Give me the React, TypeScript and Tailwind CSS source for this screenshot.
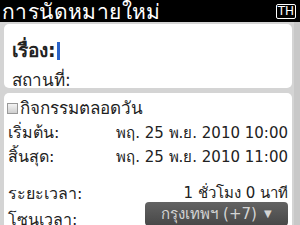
import React from 'react';

const Row = ({ label, value }: { label: string; value: string }) => (
  <div className="flex justify-between items-center h-[24px]">
    <span className="text-[16px]">{label}</span>
    <span>{value}</span>
  </div>
);

const App = () => {
  return (
    <div
      className="w-[300px] h-[225px] overflow-hidden bg-[#d4d4d4] text-[#222] text-[15px] leading-none"
      style={{ fontFamily: '"DejaVu Sans", "Noto Sans", sans-serif' }}
    >
      {/* title bar */}
      <div className="h-[22px] bg-black flex items-center justify-between pl-[2px] pr-[4px]">
        <span className="text-white text-[21px] leading-[22px] tracking-[0.4px] pt-[1px]">การนัดหมายใหม่</span>
        <span className="h-[15px] border border-white rounded-[2px] text-white text-[12px] leading-[13px] px-[1px]">TH</span>
      </div>

      <div className="flex">
        <div className="flex-1 pl-[4px] pr-[2px] pt-[2px]">
          {/* subject / location */}
          <div className="h-[64px] bg-white rounded-[5px] px-[8px] pt-[17px] flex flex-col gap-[12px]">
            <div className="flex items-center font-bold text-[19px]">
              <span>เรื่อง:</span>
              <span className="w-[3px] h-[18px] bg-[#2a63c9] ml-[1px]" />
            </div>
            <div className="text-[17px]">สถานที่:</div>
          </div>

          {/* dates */}
          <div className="mt-[5px] h-[140px] bg-white rounded-[5px] pl-[3px] pr-[4px] pt-[8px]">
            <div className="flex items-center gap-[2px] h-[14px]">
              <span className="w-[11px] h-[11px] border border-[#999] bg-gradient-to-b from-[#f4f4f4] to-[#cfcfcf]" />
              <span className="text-[17px]">กิจกรรมตลอดวัน</span>
            </div>
            <div className="pl-[1px] mt-[6px]">
              <Row label="เริ่มต้น:" value="พฤ. 25 พ.ย. 2010 10:00" />
              <Row label="สิ้นสุด:" value="พฤ. 25 พ.ย. 2010 11:00" />
              <div className="flex justify-between items-center h-[17px] mt-[16px]">
                <span className="text-[16px]">ระยะเวลา:</span>
                <span>1 ชั่วโมง 0 นาที</span>
              </div>
              <div className="flex justify-between items-start">
                <span className="text-[16px] pt-[10px]">โซนเวลา:</span>
                <div className="w-[143px] h-[24px] rounded-[4px] bg-gradient-to-b from-[#636363] to-[#474747] text-[#d4d4d4] flex items-center justify-center gap-[7px]">
                  <span>กรุงเทพฯ (+7)</span>
                  <span className="text-[10px]">▼</span>
                </div>
              </div>
            </div>
          </div>
        </div>
        {/* scroll track */}
        <div className="w-[6px] bg-[#c8c8c8]" />
      </div>
    </div>
  );
};

export default App;
